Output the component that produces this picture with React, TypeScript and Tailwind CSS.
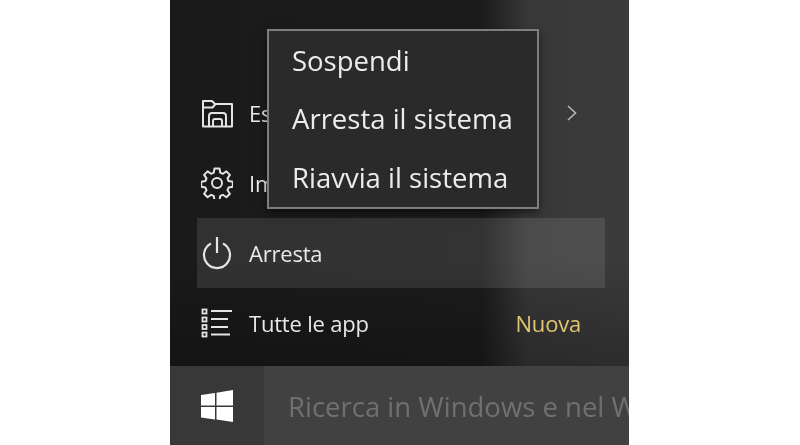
const sans = "font-['Open_Sans','Noto_Sans',sans-serif]";

function FolderIcon() {
  return (
    <svg viewBox="0 0 33 29" fill="none" stroke="currentColor" strokeWidth="2" strokeLinejoin="round" className="w-[33px] h-[29px]">
      <path d="M2 24V2h9l3 3h17v19" />
      <path d="M2 8.500h9.500l3-3.500" />
      <path d="M2 24v3.500h6V17q0-3 3-3h11q3 0 3 3v10.500h6V24" />
      <path d="M8 27.500h17M12 27v-5q0-2 2-2h5q2 0 2 2v5" />
    </svg>
  );
}

function GearIcon() {
  return (
    <svg viewBox="0 0 32 32" fill="none" stroke="currentColor" strokeWidth="2" strokeLinejoin="round" className="w-8 h-8">
      <circle cx="16" cy="16" r="5" />
      <path d="M13.500 1.500h5l.8 4.200 2.600 1.100 3.500-2.400 3.500 3.500-2.400 3.500 1.100 2.600 4.200.8v5l-4.200.8-1.100 2.600 2.400 3.500-3.500 3.500-3.500-2.400-2.600 1.100-.8 4.200h-5l-.8-4.200-2.600-1.100-3.500 2.400-3.500-3.500 2.400-3.500-1.100-2.600-4.200-.8v-5l4.200-.8 1.100-2.600-2.400-3.500 3.500-3.500 3.500 2.400 2.600-1.100z" />
    </svg>
  );
}

function PowerIcon() {
  return (
    <svg viewBox="0 0 30 34" fill="none" stroke="currentColor" strokeWidth="2.200" className="w-[30px] h-[34px]">
      <path d="M15 1v16" />
      <path d="M9 7.500a13 13 0 1 0 12 0" />
    </svg>
  );
}

function ListIcon() {
  return (
    <svg viewBox="0 0 32 30" fill="none" stroke="currentColor" className="w-8 h-[30px]">
      <g strokeWidth="1.800">
        <rect x="1.500" y="1.500" width="4" height="4" />
        <rect x="1.500" y="9.500" width="4" height="4" />
        <rect x="1.500" y="17" width="4" height="4" />
        <rect x="1.500" y="24.500" width="4" height="4" />
      </g>
      <g strokeWidth="2">
        <path d="M10 3h21M10 11h17M10 19h17M10 26.500h19" />
      </g>
    </svg>
  );
}

function WindowsIcon() {
  return (
    <svg viewBox="0 0 32 32" fill="currentColor" className="w-8 h-8">
      <path d="M0 5l14-2v12.500H0zM15.500 2.700L32 0v15.500H15.500zM0 17h14v12.500l-14-2zM15.500 17H32v15l-16.500-2.500z" />
    </svg>
  );
}

function MenuRow({ icon, label, hover, children }: { icon: React.ReactNode; label: string; hover?: boolean; children?: React.ReactNode }) {
  return (
    <div className={`flex items-center h-[70px] pr-[24px] ${hover ? "bg-white/10" : ""}`}>
      <div className="w-[40px] flex justify-center text-[#e4e4e4]">{icon}</div>
      <span className="ml-[12px] text-[22px] font-medium tracking-[-0.2px] text-[#e8e8e8]">{label}</span>
      {children}
    </div>
  );
}

export default function App() {
  return (
    <div className={`w-[800px] h-[445px] bg-white pl-[170px] overflow-hidden ${sans}`}>
      <div className="relative w-[459px] h-[445px] flex flex-col overflow-hidden blur-[0.5px]">
        {/* menu start */}
        <div className="h-[366px] shrink-0 flex flex-col justify-end pb-[8px] pl-[27px] pr-[24px] bg-[linear-gradient(180deg,transparent_70%,rgba(0,0,0,0.25)_100%),linear-gradient(90deg,#1a1a1a_0%,#1c1c1c_68%,#383838_78%,#3b3b3b_100%)]">
          <MenuRow icon={<FolderIcon />} label="Esplora file">
            <svg viewBox="0 0 10 16" fill="none" stroke="#b5b5b5" strokeWidth="1.600" className="ml-auto mr-[4px] w-[10px] h-[16px]">
              <path d="M1 1l7.500 7L1 15" />
            </svg>
          </MenuRow>
          <MenuRow icon={<GearIcon />} label="Impostazioni" />
          <MenuRow icon={<PowerIcon />} label="Arresta" hover />
          <MenuRow icon={<ListIcon />} label="Tutte le app">
            <span className="ml-auto text-[22px] font-medium tracking-[-0.2px] text-[#e3c472]">Nuova</span>
          </MenuRow>
        </div>

        {/* taskbar */}
        <div className="flex flex-1 bg-[#414141]">
          <div className="w-[94px] shrink-0 bg-[#383838] flex items-center justify-center text-white">
            <WindowsIcon />
          </div>
          <div className="pl-[24px] pt-[3px] flex items-center whitespace-nowrap text-[27.500px] text-[#707070]">
            Ricerca in Windows e nel Web
          </div>
        </div>

        {/* power flyout */}
        <div className="absolute left-[97px] top-[29px] w-[272px] h-[180px] border-2 border-[#7e7e7e] bg-[#2a2a2a] shadow-[0_4px_8px_rgba(0,0,0,0.5)] flex flex-col pl-[23px] text-[27.500px] text-[#ececec]">
          <div className="h-[59px] flex items-center">Sospendi</div>
          <div className="h-[59px] flex items-center">Arresta il sistema</div>
          <div className="h-[59px] flex items-center">Riavvia il sistema</div>
        </div>
      </div>
    </div>
  );
}
